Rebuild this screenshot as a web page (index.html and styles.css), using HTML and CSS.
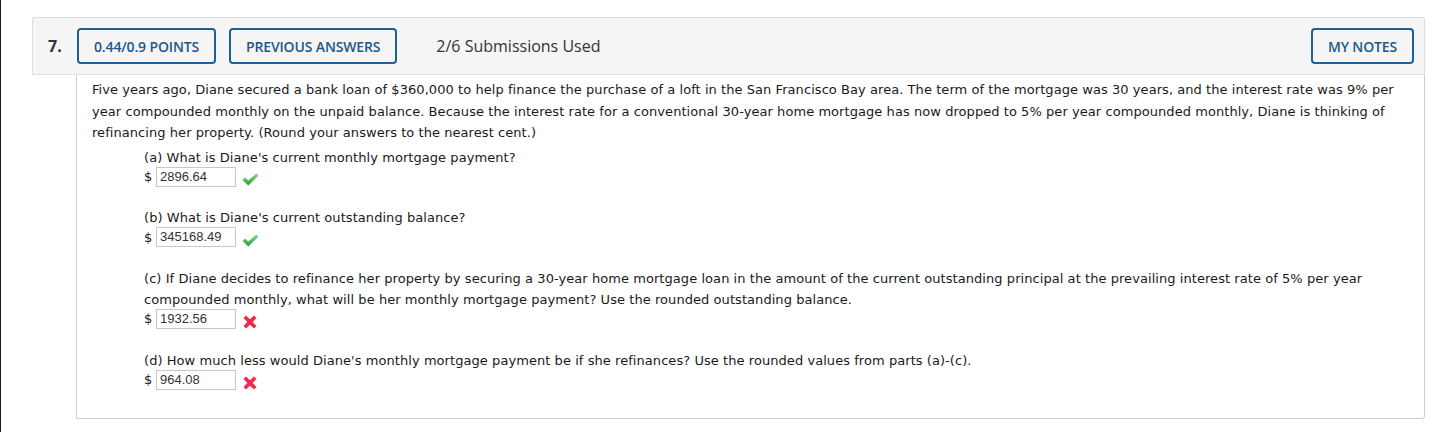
FILE: index.html
```html
<!DOCTYPE html>
<html>
<head>
<meta charset="utf-8">
<link rel="stylesheet" href="styles.css">
</head>
<body>
<div class="page">
  <div class="question">
    <div class="q-header">
      <span class="q-num">7.</span>
      <span class="btn">0.44/0.9 POINTS</span>
      <span class="btn">PREVIOUS ANSWERS</span>
      <span class="subs">2/6 Submissions Used</span>
      <span class="spacer"></span>
      <span class="btn">MY NOTES</span>
    </div>
    <div class="q-body">
      <p class="intro">Five years ago, Diane secured a bank loan of $360,000 to help finance the purchase of a loft in the San Francisco Bay area. The term of the mortgage was 30 years, and the interest rate was 9% per year compounded monthly on the unpaid balance. Because the interest rate for a conventional 30-year home mortgage has now dropped to 5% per year compounded monthly, Diane is thinking of refinancing her property. (Round your answers to the nearest cent.)</p>
      <div class="parts">
        <div class="part">
          <div class="prompt">(a) What is Diane's current monthly mortgage payment?</div>
          <div class="answer"><span class="dollar">$</span><span class="field">2896.64</span>
            <svg class="mark" width="17" height="13" viewBox="0 0 17 13"><defs><linearGradient id="g1" x1="0" y1="0" x2="0" y2="1"><stop offset="0" stop-color="#86dc86"/><stop offset="1" stop-color="#2a9a40"/></linearGradient></defs><path d="M0.5 7 L3.2 4.6 L6.3 7.6 L14.2 0.5 L16.5 2.5 L6.3 12.5 Z" fill="url(#g1)"/></svg>
          </div>
        </div>
        <div class="part">
          <div class="prompt">(b) What is Diane's current outstanding balance?</div>
          <div class="answer"><span class="dollar">$</span><span class="field">345168.49</span>
            <svg class="mark" width="17" height="13" viewBox="0 0 17 13"><defs><linearGradient id="g2" x1="0" y1="0" x2="0" y2="1"><stop offset="0" stop-color="#86dc86"/><stop offset="1" stop-color="#2a9a40"/></linearGradient></defs><path d="M0.5 7 L3.2 4.6 L6.3 7.6 L14.2 0.5 L16.5 2.5 L6.3 12.5 Z" fill="url(#g2)"/></svg>
          </div>
        </div>
        <div class="part">
          <div class="prompt">(c) If Diane decides to refinance her property by securing a 30-year home mortgage loan in the amount of the current outstanding principal at the prevailing interest rate of 5% per year compounded monthly, what will be her monthly mortgage payment? Use the rounded outstanding balance.</div>
          <div class="answer"><span class="dollar">$</span><span class="field">1932.56</span>
            <svg class="mark x" width="14" height="14" viewBox="0 0 14 14"><path d="M3 0.5 L7 4.3 L11 0.5 L13.5 3 L9.7 7 L13.5 11 L11 13.5 L7 9.7 L3 13.5 L0.5 11 L4.3 7 L0.5 3 Z" fill="#ee2d4c"/></svg>
          </div>
        </div>
        <div class="part">
          <div class="prompt">(d) How much less would Diane's monthly mortgage payment be if she refinances? Use the rounded values from parts (a)-(c).</div>
          <div class="answer"><span class="dollar">$</span><span class="field">964.08</span>
            <svg class="mark x" width="14" height="14" viewBox="0 0 14 14"><path d="M3 0.5 L7 4.3 L11 0.5 L13.5 3 L9.7 7 L13.5 11 L11 13.5 L7 9.7 L3 13.5 L0.5 11 L4.3 7 L0.5 3 Z" fill="#ee2d4c"/></svg>
          </div>
        </div>
      </div>
    </div>
  </div>
</div>
</body>
</html>
```
FILE: styles.css
```css
html, body {
  margin: 0;
  padding: 0;
  background: #fff;
}
body {
  width: 1440px;
  height: 432px;
  overflow: hidden;
  border-left: 1px solid #1a1a1a;
  box-sizing: border-box;
}
.page {
  padding: 17px 15px 0 31px;
}
.q-header {
  display: flex;
  align-items: center;
  height: 56px;
  background: #f5f5f5;
  border: 1px solid #dedede;
  border-radius: 2px 2px 0 0;
  padding: 0 10px 0 15px;
  font-family: "Open Sans", "Liberation Sans", sans-serif;
}
.q-num {
  font-size: 16px;
  font-weight: 700;
  color: #333;
  width: 29px;
}
.btn {
  display: inline-flex;
  align-items: center;
  height: 32px;
  padding: 0 15px;
  border: 2px solid #1b6198;
  border-radius: 4px;
  color: #1d578b;
  font-size: 14px;
  font-weight: 600;
  margin-right: 13px;
  letter-spacing: -0.15px;
}
.subs {
  margin-left: 26px;
  font-size: 16px;
  color: #333;
}
.spacer { flex: 1; }
.q-header .btn:last-child { margin-right: 0; }
.q-body {
  margin-left: 44px;
  border: 1px solid #cfcfcf;
  border-top: none;
  border-radius: 0 0 3px 0;
  padding: 4px 15px 28px 15px;
  font-family: "DejaVu Sans", Verdana, sans-serif;
  font-size: 13px;
  color: #1a1a1a;
}
.intro {
  margin: 0;
  line-height: 21.5px;
  letter-spacing: 0.06px;
}
.parts {
  margin: 3px 0 0 52px;
  display: flex;
  flex-direction: column;
  gap: 20.7px;
}
.prompt {
  line-height: 21px;
  letter-spacing: 0.06px;
}
.answer {
  display: flex;
  align-items: center;
  height: 20px;
  margin-top: -1px;
}
.dollar {
  width: 12px;
}
.field {
  box-sizing: border-box;
  width: 80px;
  height: 20px;
  border: 1px solid #c8c8c8;
  padding: 0 3px;
  font-family: "Liberation Sans", Arial, sans-serif;
  font-size: 13px;
  line-height: 18px;
  color: #333;
}
.mark {
  margin-left: 6px;
  margin-top: 6px;
}
.mark.x {
  margin-left: 7px;
  margin-top: 6px;
}
```
